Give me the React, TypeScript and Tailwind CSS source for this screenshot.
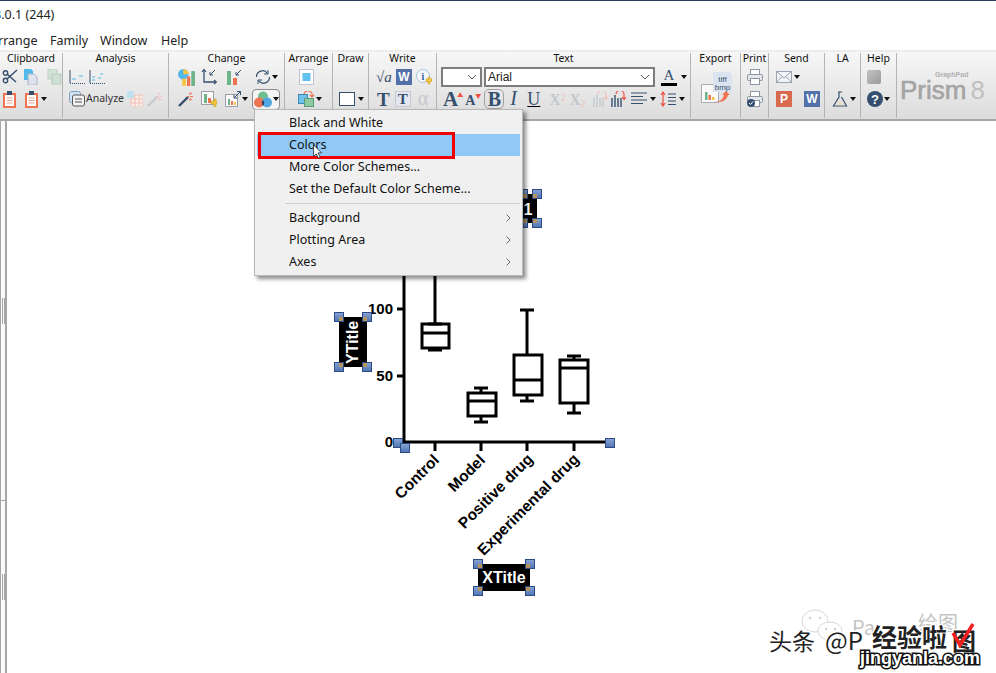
import React from "react";

const UI = { fontFamily: '"Noto Sans", "Noto Sans CJK SC", sans-serif' };
const navy = "#34506e";
const blue = "#52b9ec";
const red = "#ef7350";
const green = "#6db48a";
const yellow = "#f4c542";

type P = { children: React.ReactNode; vb?: string; className?: string };
const S = ({ children, className = "w-4 h-4", vb = "0 0 16 16" }: P) => (
  <svg viewBox={vb} className={`block shrink-0 ${className}`} fill="none">{children}</svg>
);
const Caret = ({ className = "" }: { className?: string }) => (
  <svg viewBox="0 0 6 4" className={`block shrink-0 w-[6px] h-[4px] ${className}`}><path d="M0 0h6L3 4z" fill="#111" /></svg>
);

const Scissors = () => (
  <S>
    <path d="M15 1 5 10M14 13 5 5" stroke="#34506e" strokeWidth="1.5" />
    <circle cx="3.5" cy="4" r="2.2" stroke="#34506e" strokeWidth="1.4" />
    <circle cx="3.5" cy="11.5" r="2.2" stroke="#34506e" strokeWidth="1.4" />
  </S>
);
const PasteDoc = () => (
  <S>
    <path d="M1 0h7l2 2v9H1z" fill={blue} />
    <path d="M5 5h6l3 3v8H5z" fill="#dfe3ee" stroke="#aab2c6" />
  </S>
);
const CopyGrey = () => (
  <S>
    <rect x="1" y="0" width="9" height="10" fill="#d5e4da" stroke="#bdd0c3" />
    <rect x="5" y="5" width="9" height="10" fill="#cfe0d5" stroke="#b5cbbc" />
  </S>
);
const Clip = () => (
  <S className="w-[13px] h-[17px]" vb="0 0 13 17">
    <rect x="1" y="3" width="11" height="13" fill="#fff" stroke="#ef7350" strokeWidth="2" />
    <rect x="4" y="0" width="5" height="4" fill="#34506e" />
    <path d="M3.5 7h6M3.5 9.5h6M3.5 12h6" stroke="#e9a08a" />
  </S>
);
const AxisA = ({ v = 0 }: { v?: number }) => (
  <S>
    <path d="M1 1v13" stroke="#34506e" />
    <path d="M1 14.500h15" stroke="#34506e" strokeDasharray="1 1" />
    {v === 0 ? (
      <path d="M3 10h4M10 7h4" stroke={blue} strokeWidth="1.2" />
    ) : (
      <path d="M3 11h3M3 8h3M9 9h3M11 5h3" stroke={blue} strokeWidth="1.2" />
    )}
  </S>
);
const AnalyzeI = () => (
  <S>
    <rect x="0.5" y="0.5" width="11" height="11" rx="2" fill="#cfe3f4" stroke="#7fa2c4" />
    <rect x="3.5" y="4" width="12" height="11" rx="2" fill="#f3f3f3" stroke="#555" />
    <path d="M6 8h7M6 11h7" stroke="#555" strokeWidth="1.2" />
  </S>
);
const GridI = () => (
  <S>
    <rect x="4" y="4" width="12" height="12" fill="#fbeeea" stroke="#f0c0b2" />
    <path d="M8 4v12M12 4v12M4 8h12M4 12h12" stroke="#f0c0b2" />
    <rect x="0" y="0" width="7" height="7" fill="#bfe0ef" />
  </S>
);
const Wand = ({ grey = false }: { grey?: boolean }) => (
  <S>
    <path d="M1 15 10 6" stroke={grey ? "#c3c8cf" : "#34506e"} strokeWidth="2.4" />
    <path d="M12 1v3M12 7v3M15 5.500h-3M9 5.500h2M14 2l-1.500 1.500M14 9l-1.500-1.500" stroke={grey ? "#efc4b8" : "#ef7350"} strokeWidth="1" />
  </S>
);
const PieBars = () => (
  <S className="w-[17px] h-[17px]">
    <circle cx="5" cy="5" r="5" fill={blue} />
    <path d="M5 5V0a5 5 0 0 1 5 5z" fill={yellow} />
    <rect x="4" y="9" width="3.500" height="7" fill={yellow} />
    <rect x="8.500" y="7" width="3" height="9" fill={red} />
    <rect x="12.500" y="2" width="3.500" height="14" fill={green} />
  </S>
);
const AxesArrows = () => (
  <S>
    <path d="M3 1v12h12" stroke="#34506e" strokeWidth="1.3" />
    <path d="M1 3l2-2.500L5 3M13 11l2.500 2-2.500 2" stroke="#34506e" strokeWidth="1.2" />
    <path d="M14 1 9 6M9 3v3h3" stroke="#34506e" />
  </S>
);
const BarsArrow = () => (
  <S>
    <rect x="1" y="2" width="4" height="14" fill={green} />
    <rect x="7" y="9" width="4" height="7" fill={red} />
    <path d="M15 1l-5 5M10 3v3h3" stroke="#34506e" />
  </S>
);
const Cycle = () => (
  <S className="w-[17px] h-[16px]">
    <path d="M2 8a6 6 0 0 1 11-3.500M15 8a6 6 0 0 1-11 3.500" stroke="#34506e" strokeWidth="1.2" />
    <path d="M13.500 1v4h-4M3.500 15v-4h4" stroke="#34506e" strokeWidth="1" />
  </S>
);
const BarsPlus = () => (
  <S>
    <rect x="0.500" y="0.500" width="12" height="13" fill="#fafafa" stroke="#9aa0a8" />
    <rect x="3" y="3" width="3" height="9" fill={green} />
    <rect x="7" y="7" width="3" height="5" fill={red} />
    <path d="M10 10h3V8h2v2h1v3h-1v3h-2v-3h-3z" fill={yellow} stroke="#c99a20" strokeWidth=".5" />
  </S>
);
const ExpandChart = () => (
  <S>
    <rect x="0.500" y="3.500" width="12" height="12" fill="#fafafa" stroke="#9aa0a8" />
    <rect x="3" y="8" width="2" height="6" fill={green} />
    <rect x="6" y="10" width="2" height="4" fill={red} />
    <rect x="9" y="11" width="2" height="3" fill={yellow} />
    <path d="M15.500 .5 9 7M12 .5h3.500V4M9 3.500V7h3.500" stroke="#34506e" />
  </S>
);
const Venn = () => (
  <S className="w-[18px] h-[17px]" vb="0 0 18 17">
    <circle cx="9" cy="5.500" r="5" fill="#6fbf8e" />
    <circle cx="5" cy="11.500" r="5" fill="#ef7350" />
    <circle cx="13" cy="11.500" r="5" fill="#52a8e4" />
    <path d="M9 9a5 5 0 0 1 0 6 5 5 0 0 1 0-6z" fill="#34405a" />
  </S>
);
const ArrangeA = () => (
  <S className="w-[15px] h-[16px]" vb="0 0 15 16">
    <rect x=".5" y=".5" width="14" height="15" fill="#fff" stroke="#bac4d2" />
    <rect x="3.500" y="4" width="8" height="8" fill="#61c2f0" />
  </S>
);
const ArrangeB = () => (
  <S className="w-[17px] h-[16px]" vb="0 0 17 16">
    <rect x="0.500" y="3.500" width="9" height="9" fill="#6dc3ec" stroke="#3f87b5" />
    <rect x="6.500" y="7.500" width="9" height="8" fill="#8ccba3" stroke="#5c9e77" />
    <path d="M6 3a4 4 0 0 1 8 2M12 4l2 2 2-2" stroke="#ef7350" strokeWidth="1.2" />
  </S>
);
const Sqrt = () => (
  <span className="flex items-baseline w-[16px] h-[18px] text-[#34506e] text-[15px] italic leading-[18px]" style={{ fontFamily: '"Liberation Serif", serif' }}>√a</span>
);
const WordBadge = ({ c = "#5271a8", t = "W", s = "w-4 h-4" }: { c?: string; t?: string; s?: string }) => (
  <span className={`flex items-center justify-center text-white font-bold text-[12px] leading-none shrink-0 ${s}`} style={{ background: c, fontFamily: '"Liberation Sans", sans-serif' }}>{t}</span>
);
const InfoPlus = () => (
  <S>
    <circle cx="7" cy="7" r="6.500" fill="#f4f7fb" stroke="#a8c4de" />
    <text x="7" y="11" textAnchor="middle" fontSize="10" fontWeight="700" fontFamily="Liberation Serif" fill="#2f5f9a">i</text>
    <path d="M10 10h2V8h2v2h2v2.500h-2V15h-2v-2.500h-2z" fill={yellow} stroke="#c99a20" strokeWidth=".5" />
  </S>
);
const SerifT = ({ c = navy, cls = "text-[19px]", t = "T" }: { c?: string; cls?: string; t?: string }) => (
  <span className={`leading-none font-bold ${cls}`} style={{ color: c, fontFamily: '"Liberation Serif", serif' }}>{t}</span>
);
const AlignI = () => (
  <S>
    <path d="M0 2h16M0 5.500h12M0 9h16M0 12.500h12" stroke="#34506e" strokeWidth="1" />
  </S>
);
const BarsUndo = ({ dark = false }: { dark?: boolean }) => (
  <S>
    <path d="M2 7v9M5 4v12M8 7v9M11 7v9" stroke={dark ? "#34506e" : "#c4c8cc"} strokeWidth="1.4" />
    <path d="M6 3a4 4 0 0 1 8 1v4M12 6l2 2.500L16 6" stroke={dark ? "#ef5040" : "#efc4b8"} strokeWidth="1.200" />
  </S>
);
const Spacing = () => (
  <S>
    <path d="M3 1v14M1 4l2-3 2 3M1 12l2 3 2-3" stroke="#ef5040" strokeWidth="1.200" />
    <path d="M8 3h8M8 6.500h8M8 10h8M8 13.500h8" stroke="#34506e" strokeWidth="1" />
  </S>
);
const Printer = ({ check = false }: { check?: boolean }) => (
  <S>
    <rect x="3.500" y=".5" width="9" height="5" fill="#fff" stroke="#8d97a3" />
    <rect x=".5" y="5.500" width="15" height="6" rx="1" fill="#e4e6ea" stroke="#8d97a3" />
    <rect x="3.500" y="9.500" width="9" height="6" fill="#fff" stroke="#8d97a3" />
    {check && <circle cx="4" cy="12" r="4" fill="#34506e" />}
    {check && <path d="M2 12l1.500 1.500L6 10.500" stroke="#fff" />}
  </S>
);
const Mail = () => (
  <S className="w-[16px] h-[12px]" vb="0 0 16 12">
    <rect x=".5" y=".5" width="15" height="11" fill="#f2f4f7" stroke="#9aa4b0" />
    <path d="M.5.5 8 7l7.500-6.500M.5 11.500 6 5.500M15.500 11.500 10 5.500" stroke="#9aa4b0" />
  </S>
);
const Flask = () => (
  <S>
    <path d="M6 1h4M7 1v5L1.500 15h13L9.500 6" stroke="#34506e" strokeWidth="1.200" />
    <path d="M5 10h6l2.500 4.500h-11z" fill="#f6d9ae" opacity=".4" />
  </S>
);
const Export = () => (
  <svg viewBox="0 0 33 33" className="block w-[33px] h-[33px] shrink-0" fill="none">
    <rect x="1.500" y="13.500" width="17" height="18" fill="#fafafa" stroke="#a8aeb6" />
    <rect x="5" y="21" width="2.500" height="8" fill={green} />
    <rect x="8.500" y="24" width="2.500" height="5" fill={red} />
    <rect x="12" y="26" width="2.500" height="3" fill={yellow} />
    <path d="M13 1h16l3 3v17H13z" fill="#dbe4ee" />
    <text x="22.500" y="10.500" textAnchor="middle" fontSize="8" fill="#34506e" fontFamily="Liberation Sans">tiff</text>
    <text x="22.500" y="18.500" textAnchor="middle" fontSize="8" fill="#34506e" fontFamily="Liberation Sans">bmp</text>
    <path d="M15 31c5 0 8-3 9-7l-2 0 4-4 4 4-2 0c-1 5-6 8-13 7z" fill="#ef7350" />
  </svg>
);
const HelpI = () => (
  <span className="flex items-center justify-center w-4 h-4 rounded-full bg-[#34506e] text-white text-[13px] font-bold leading-none shrink-0" style={{ fontFamily: '"Liberation Sans", sans-serif' }}>?</span>
);

const Group = ({ label, w, children }: { label: string; w: string; children: React.ReactNode }) => (
  <div className={`flex flex-col h-[65px] shrink-0 border-r border-[#b4b4b4] ${w}`}>
    <div className="h-[16px] -mt-[3px] text-center text-[10.5px] leading-[16px] text-[#111]">{label}</div>
    {children}
  </div>
);
const Row = ({ className, children }: { className: string; children?: React.ReactNode }) => (
  <div className={`flex items-center h-[22px] ${className}`}>{children}</div>
);

const Chevron = () => (
  <svg viewBox="0 0 5 8" className="block w-[5px] h-[8px]" fill="none"><path d="M.5.5 4 4 .5 7.500" stroke="#666" /></svg>
);
const MenuRow = ({ t, sub = false }: { t: string; sub?: boolean }) => (
  <div className="relative flex items-center h-[22px] pl-[34px] pr-[11px] justify-between text-[12.5px] text-[#111]">
    <span>{t}</span>
    {sub && <Chevron />}
  </div>
);

const Handle = ({ x, y }: { x: number; y: number }) => (
  <rect x={x - 4.500} y={y - 4.500} width="9" height="9" fill="url(#hg)" stroke="#2c4a86" />
);
const TitleBox = ({ x, y, w, h }: { x: number; y: number; w: number; h: number }) => (
  <g>
    <rect x={x} y={y} width={w} height={h} fill="#000" />
    {[[x, y], [x + w, y], [x, y + h], [x + w, y + h]].map(([a, b], i) => (
      <g key={i}>
        <Handle x={a} y={b} />
        <rect x={a + (a === x ? 0 : -4)} y={b + (b === y ? 0 : -4)} width="4" height="4" fill="#b3945a" />
      </g>
    ))}
  </g>
);
const Box = ({ cx, l, r, t, b, m, hi, lo }: { cx: number; l: number; r: number; t: number; b: number; m: number; hi: number; lo: number }) => (
  <g stroke="#000" strokeWidth="3" fill="none">
    <rect x={l} y={t} width={r - l} height={b - t} />
    <path d={`M${l} ${m}H${r}M${cx} ${t}V${hi}M${cx} ${b}V${lo}M${cx - 7} ${lo}H${cx + 7}M${cx - 7} ${hi}H${cx + 7}`} />
  </g>
);

const Chart = () => (
  <svg viewBox="0 0 996 673" className="absolute left-0 top-0 w-[996px] h-[673px]" fill="none">
    <defs>
      <linearGradient id="hg" x1="0" y1="0" x2="0" y2="1">
        <stop offset="0" stopColor="#88a4d4" />
        <stop offset="1" stopColor="#4f75b4" />
      </linearGradient>
    </defs>
    <g stroke="#000" strokeWidth="3">
      <path d="M404 270V442H609" />
      <path d="M397 309H404M397 376H404M397 442H404M435 442V451M481 442V451M527 442V451M574 442V451" />
    </g>
    <path d="M435 270V324" stroke="#000" strokeWidth="3" />
    <Box cx={435} l={422} r={449} t={324} b={348} m={333} hi={324} lo={350} />
    <Box cx={481} l={468} r={496} t={393} b={416} m={401} hi={388} lo={422} />
    <Box cx={527} l={514} r={542} t={355} b={395} m={380} hi={310} lo={401} />
    <Box cx={574} l={560} r={588} t={360} b={403} m={368} hi={356} lo={413} />
    <g fontFamily="Liberation Sans" fontWeight="700" fontSize="15" fill="#000" textAnchor="end">
      <text x="393" y="314">100</text>
      <text x="393" y="381">50</text>
      <text x="393" y="447">0</text>
    </g>
    <g fontFamily="Liberation Sans" fontWeight="700" fontSize="15.500" fill="#000" textAnchor="end">
      <text transform="translate(440 461) rotate(-45)">Control</text>
      <text transform="translate(486 461) rotate(-45)">Model</text>
      <text transform="translate(534 460) rotate(-45)">Positive drug</text>
      <text transform="translate(580 460) rotate(-45)">Experimental drug</text>
    </g>
    <TitleBox x={339} y={317} w={28} h={50} />
    <text transform="translate(358 364) rotate(-90)" fontFamily="Liberation Sans" fontWeight="700" fontSize="16" fill="#fff">YTitle</text>
    <TitleBox x={478} y={564} w={52} h={27} />
    <text x="504" y="583" textAnchor="middle" fontFamily="Liberation Sans" fontWeight="700" fontSize="16" fill="#fff">XTitle</text>
    <TitleBox x={523} y={194} w={14} h={29} />
    <text x="528" y="215" textAnchor="middle" fontFamily="Liberation Sans" fontWeight="700" fontSize="16" fill="#fff">1</text>
    <Handle x={398} y={443} />
    <Handle x={405} y={448} />
    <Handle x={610} y={443} />
  </svg>
);

const Watermark = () => (
  <svg viewBox="0 0 996 673" className="absolute left-0 top-0 w-[996px] h-[673px]" fill="none">
    <g stroke="#d8d8d8" strokeWidth="1" fill="#fff">
      <ellipse cx="815" cy="621" rx="13" ry="11" />
      <ellipse cx="830" cy="631" rx="12" ry="9" />
    </g>
    <g fill="#d0d0d0">
      <circle cx="810" cy="618" r="1.200" /><circle cx="820" cy="618" r="1.200" />
      <circle cx="826" cy="629" r="1.200" /><circle cx="835" cy="629" r="1.200" />
    </g>
    <g fontFamily="Noto Sans CJK SC" fill="#c4c4c4" fontSize="20">
      <text x="852" y="635">Pa</text>
      <text x="918" y="631">绘图</text>
    </g>
    <g fontFamily="Noto Sans CJK SC" fontWeight="700" stroke="#fff" strokeWidth="3" style={{ paintOrder: "stroke" }} fill="#222">
      <text x="769" y="650" fontWeight="400" fontSize="23">头条</text>
      <text x="825" y="650" fontWeight="400" fontSize="24">@P</text>
      <text x="872" y="647" fontSize="25">经验啦</text>
      <text x="952" y="650" fontSize="24">图</text>
    </g>
    <text x="860" y="664" fontFamily="Liberation Sans" fontWeight="700" fontSize="18" stroke="#111" strokeWidth="3" style={{ paintOrder: "stroke" }} fill="#fff">jingyanla.com</text>
    <path d="M953 633 960 645 973 624" stroke="#f02020" strokeWidth="3.500" />
  </svg>
);

export default function App() {
  return (
    <div className="relative w-[996px] h-[673px] overflow-hidden bg-white flex flex-col" style={UI}>
      <div className="h-[1px] bg-[#2f3f5c] shrink-0" />
      <div className="h-[29px] shrink-0 flex items-center text-[12.5px] text-[#222] whitespace-nowrap">
        <span className="-ml-[6px]">8.0.1 (244)</span>
      </div>
      <div className="h-[20px] shrink-0 flex items-center pt-[2px] text-[12.5px] text-[#222]">
        <span className="-ml-[10px] w-[60px]">Arrange</span>
        <span className="w-[50px]">Family</span>
        <span className="w-[61px]">Window</span>
        <span>Help</span>
      </div>
      <div className="h-[71px] shrink-0 flex pt-[1px] border-b-2 border-[#a6a6a6] bg-gradient-to-b from-[#f7f7f7] to-[#dcdcdc] border-t-2 border-t-[#ececec]">
        <Group label="Clipboard" w="w-[63px]">
          <Row className="pl-[2px] gap-[5px]"><Scissors /><PasteDoc /><span className="ml-[3px]"><CopyGrey /></span></Row>
          <Row className="pl-[3px]"><Clip /><span className="ml-[9px]"><Clip /></span><Caret className="ml-[3px]" /></Row>
        </Group>
        <Group label="Analysis" w="w-[106px]">
          <Row className="pl-[6px] gap-[4px]"><AxisA /><AxisA v={1} /></Row>
          <Row className="pl-[6px]"><AnalyzeI /><span className="ml-[1px] w-[41px] text-[10.5px] text-[#333]">Analyze</span><GridI /><span className="ml-[4px]"><Wand grey /></span></Row>
        </Group>
        <Group label="Change" w="w-[116px]">
          <Row className="pl-[9px] gap-[6px]"><PieBars /><AxesArrows /><span className="ml-[3px]"><BarsArrow /></span><span className="ml-[6px]"><Cycle /></span><Caret className="-ml-[5px]" /></Row>
          <Row className="pl-[9px]">
            <Wand /><span className="ml-[7px]"><BarsPlus /></span><span className="ml-[8px]"><ExpandChart /></span><Caret className="ml-[1px]" />
            <span className="ml-[4px] flex items-center gap-[1px] w-[28px] h-[21px] pl-[1px] rounded-[4px] border border-[#8d8d8d] bg-[#f4f4f4]"><Venn /><Caret /></span>
          </Row>
        </Group>
        <Group label="Arrange" w="w-[48px]">
          <Row className="pl-[14px]"><ArrangeA /></Row>
          <Row className="pl-[13px] gap-[1px]"><ArrangeB /><Caret /></Row>
        </Group>
        <Group label="Draw" w="w-[36px]">
          <Row className="" />
          <Row className="pl-[6px] gap-[3px]"><span className="block w-[16px] h-[14px] border border-[#34506e] bg-white" /><Caret /></Row>
        </Group>
        <Group label="Write" w="w-[68px]">
          <Row className="pl-[7px] gap-[4px]"><Sqrt /><WordBadge /><InfoPlus /></Row>
          <Row className="pl-[8px]"><SerifT /><span className="ml-[5px] flex items-center justify-center w-[16px] h-[16px] bg-[#e4e6f0] border border-[#c6c8d4]"><SerifT cls="text-[15px]" /></span><span className="ml-[7px]"><SerifT c="#c4c8cc" cls="text-[20px] font-normal" t="α" /></span></Row>
        </Group>
        <Group label="Text" w="w-[254px]">
          <Row className="pl-[4px] gap-[2px]">
            <span className="flex items-center justify-end w-[41px] h-[20px] border-2 border-[#7d7d7d] bg-white pr-[3px]"><svg viewBox="0 0 10 6" className="w-[10px] h-[6px]" fill="none"><path d="M1 1l4 4 4-4" stroke="#555" /></svg></span>
            <span className="flex items-center justify-between w-[171px] h-[20px] border-2 border-[#7d7d7d] bg-white pl-[2px] pr-[3px] text-[12px] text-[#222]" style={{ fontFamily: '"Liberation Sans", sans-serif' }}>Arial<svg viewBox="0 0 10 6" className="w-[10px] h-[6px]" fill="none"><path d="M1 1l4 4 4-4" stroke="#555" /></svg></span>
            <span className="ml-[4px] flex flex-col items-center w-[16px] h-[19px] leading-none"><SerifT cls="text-[15px] font-normal" t="A" /><span className="block w-[16px] h-[3px] bg-black" /></span>
            <Caret className="ml-[2px]" />
          </Row>
          <Row className="pl-[6px]">
            <SerifT cls="text-[21px]" t="A" /><span className="-ml-[1px] -mt-[9px] text-[#ef5040] text-[6px] leading-none">▲</span>
            <span className="ml-[2px]"><SerifT cls="text-[14px]" t="A" /></span><span className="-mt-[7px] text-[#ef5040] text-[6px] leading-none">▼</span>
            <span className="ml-[3px] flex items-center justify-center w-[20px] h-[20px] rounded-[5px] border border-[#a0a0a0]"><SerifT cls="text-[20px]" t="B" /></span>
            <span className="ml-[6px] w-[11px] italic"><SerifT cls="text-[20px] font-normal" t="I" /></span>
            <span className="ml-[6px] w-[13px] underline"><SerifT cls="text-[18px] font-normal" t="U" /></span>
            <span className="ml-[9px] w-[20px]"><SerifT c="#c4c8cc" cls="text-[16px]" t="X" /><sup className="text-[8px] text-[#efc4b8]">2</sup></span>
            <span className="w-[21px]"><SerifT c="#c4c8cc" cls="text-[16px]" t="X" /><sub className="text-[8px] text-[#efc4b8]">2</sub></span>
            <span className="ml-[2px]"><BarsUndo /></span>
            <span className="ml-[2px]"><BarsUndo dark /></span>
            <span className="ml-[5px]"><AlignI /></span><Caret className="ml-[3px]" />
            <span className="ml-[4px]"><Spacing /></span><Caret className="ml-[3px]" />
          </Row>
        </Group>
        <Group label="Export" w="w-[50px]">
          <div className="pl-[9px] pt-[5px]"><Export /></div>
        </Group>
        <Group label="Print" w="w-[28px]">
          <Row className="pl-[6px]"><Printer /></Row>
          <Row className="pl-[6px]"><Printer check /></Row>
        </Group>
        <Group label="Send" w="w-[56px]">
          <Row className="pl-[7px] gap-[2px]"><Mail /><Caret /></Row>
          <Row className="pl-[7px] gap-[12px]"><WordBadge c="#d9694f" t="P" /><WordBadge /></Row>
        </Group>
        <Group label="LA" w="w-[36px]">
          <Row className="" />
          <Row className="pl-[7px] gap-[2px]"><Flask /><Caret /></Row>
        </Group>
        <Group label="Help" w="w-[36px]">
          <Row className="pl-[6px]"><span className="block w-[14px] h-[14px] rounded-[2px] bg-gradient-to-br from-[#c4c4c4] to-[#9a9a9a]" /></Row>
          <Row className="pl-[6px] gap-[1px]"><HelpI /><Caret /></Row>
        </Group>
        <div className="flex-1 pl-[3px] pt-[18px] flex flex-col" style={{ fontFamily: '"Liberation Sans", sans-serif' }}>
          <div className="h-[8px] pl-[35px] text-[7px] leading-[8px] text-[#b0b0b0] font-bold">GraphPad</div>
          <div className="flex items-baseline leading-[22px] text-[#a4a4a4] text-[26px] [-webkit-text-stroke:0.6px_#a4a4a4]">Prism<span className="ml-[4px] text-[#c0c0c0] [-webkit-text-stroke:0]">8</span></div>
        </div>
      </div>
      <div className="flex-1 flex min-h-0">
        <div className="w-[7px] shrink-0 flex flex-col border-l border-r-2 border-[#a6a6a6] bg-[#fafafa]">
          <div className="h-[380px] shrink-0 flex items-center justify-center gap-[1px] border-b border-[#a6a6a6]">
            <span className="block w-[1px] h-[26px] bg-[#a6a6a6]" /><span className="block w-[1px] h-[26px] bg-[#a6a6a6]" />
          </div>
          <div className="flex-1 flex items-center justify-center gap-[1px]">
            <span className="block w-[1px] h-[26px] bg-[#a6a6a6]" /><span className="block w-[1px] h-[26px] bg-[#a6a6a6]" />
          </div>
        </div>
        <div className="flex-1 bg-white" />
      </div>

      <Chart />
      <Watermark />

      <div className="absolute left-[254px] top-[109px] w-[269px] h-[167px] pt-[2px] bg-[#f0f0f0] border border-[#b8b8b8] shadow-[3px_3px_4px_rgba(0,0,0,0.45)]">
        <MenuRow t="Black and White" />
        <div className="relative">
          <div className="absolute left-[2px] right-[2px] top-0 h-[22px] bg-[#90c8f6]" />
          <MenuRow t="Colors" />
          <div className="absolute left-[3px] top-[-2px] w-[197px] h-[27px] border-[3px] border-[#f00000]" />
          <svg viewBox="0 0 12 18" className="absolute left-[57px] top-[10px] w-[12px] h-[16px]"><path d="M1 1v13l3-3 2.500 5 2-1-2.500-5h4z" fill="#fff" stroke="#111" strokeWidth=".8" /></svg>
        </div>
        <MenuRow t="More Color Schemes..." />
        <MenuRow t="Set the Default Color Scheme..." />
        <div className="h-[7px] flex items-center pl-[30px] pr-[2px]"><div className="w-full h-[1px] bg-[#d0d0d0]" /></div>
        <MenuRow t="Background" sub />
        <MenuRow t="Plotting Area" sub />
        <MenuRow t="Axes" sub />
      </div>
    </div>
  );
}
